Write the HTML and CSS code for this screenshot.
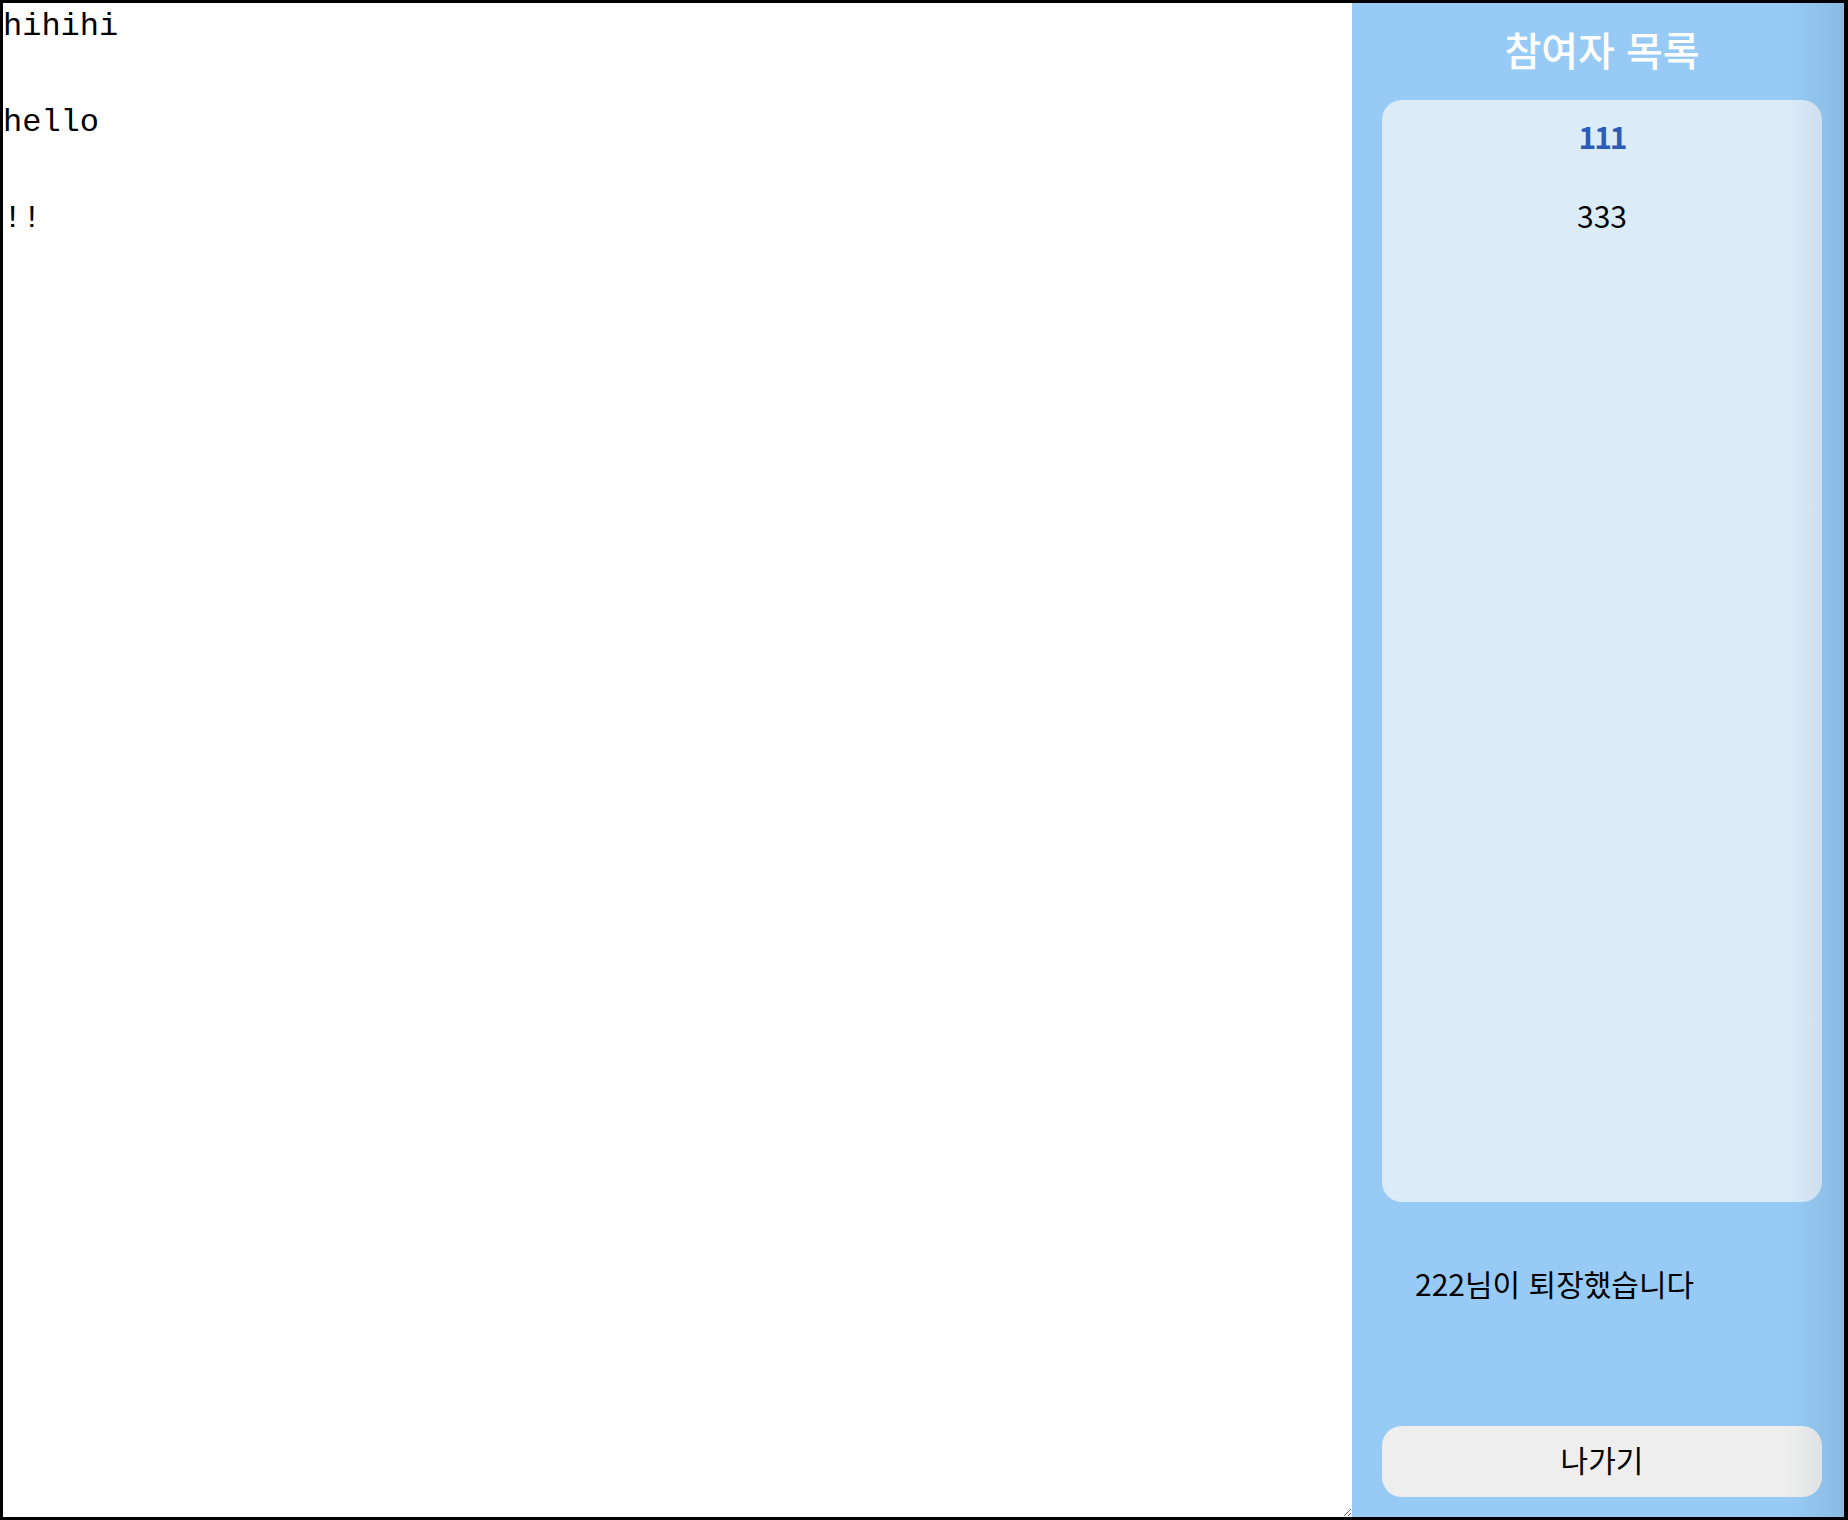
FILE: index.html
```html
<!DOCTYPE html>
<html lang="ko">
<head>
<meta charset="utf-8">
<title>Room</title>
<link rel="stylesheet" href="styles.css">
</head>
<body>
<div class="frame">
  <div class="app">
    <textarea class="editor" spellcheck="false">hihihi

hello

!!</textarea>
    <aside class="sidebar">
      <h2 class="title">참여자 목록</h2>
      <ul class="members">
        <li class="member me">111</li>
        <li class="member">333</li>
      </ul>
      <div class="notice">222님이 퇴장했습니다</div>
      <button class="leave" type="button">나가기</button>
    </aside>
    <div class="edge-shade"></div>
  </div>
</div>
</body>
</html>
```
FILE: styles.css
```css
html, body {
  margin: 0;
  padding: 0;
  background: #000;
}

.frame {
  width: 1848px;
  height: 1520px;
  box-sizing: border-box;
  border-style: solid;
  border-color: #000;
  border-width: 3px 4px 3px 3px;
}

.app {
  position: relative;
  display: flex;
  width: 100%;
  height: 100%;
  overflow: hidden;
  background: #fff;
}

.editor {
  flex: 0 0 1349px;
  width: 1349px;
  height: 100%;
  box-sizing: border-box;
  margin: 0;
  padding: 0;
  border: none;
  outline: none;
  background: #fff;
  color: #000;
  font-family: "Liberation Mono", "Courier New", monospace;
  font-size: 32px;
  line-height: 48px;
}

.sidebar {
  flex: 0 0 500px;
  width: 500px;
  height: 100%;
  box-sizing: border-box;
  display: flex;
  flex-direction: column;
  padding: 0 30px 20px;
  background: #97cbf5;
  font-family: "Noto Sans CJK KR", "Noto Sans", sans-serif;
  color: #000;
}

.title {
  height: 97px;
  box-sizing: border-box;
  padding-bottom: 6px;
  margin: 0;
  display: flex;
  align-items: center;
  justify-content: center;
  font-size: 40px;
  font-weight: 500;
  color: #fff;
}

.members {
  flex: 1 1 auto;
  margin: 0;
  padding: 15px 0 0;
  list-style: none;
  background: #dbebf8;
  border-radius: 20px;
  display: flex;
  flex-direction: column;
  gap: 37px;
}

.member {
  height: 42px;
  line-height: 42px;
  text-align: center;
  font-size: 30px;
}

.member.me {
  font-weight: 700;
  color: #2a5cb8;
  letter-spacing: -2px;
}

.notice {
  height: 224px;
  box-sizing: border-box;
  padding: 60px 0 0 33px;
  font-size: 30px;
  line-height: 42px;
}

.leave {
  height: 71px;
  width: 100%;
  border: none;
  border-radius: 20px;
  background: #eeeeee;
  color: #000;
  font-family: "Noto Sans CJK KR", "Noto Sans", sans-serif;
  font-size: 30px;
  line-height: 1;
  padding: 0 0 6px;
}

.edge-shade {
  position: absolute;
  top: 0;
  right: 0;
  bottom: 0;
  width: 56px;
  pointer-events: none;
  background: linear-gradient(to right, rgba(20, 40, 70, 0), rgba(20, 40, 70, 0.1));
}
```
